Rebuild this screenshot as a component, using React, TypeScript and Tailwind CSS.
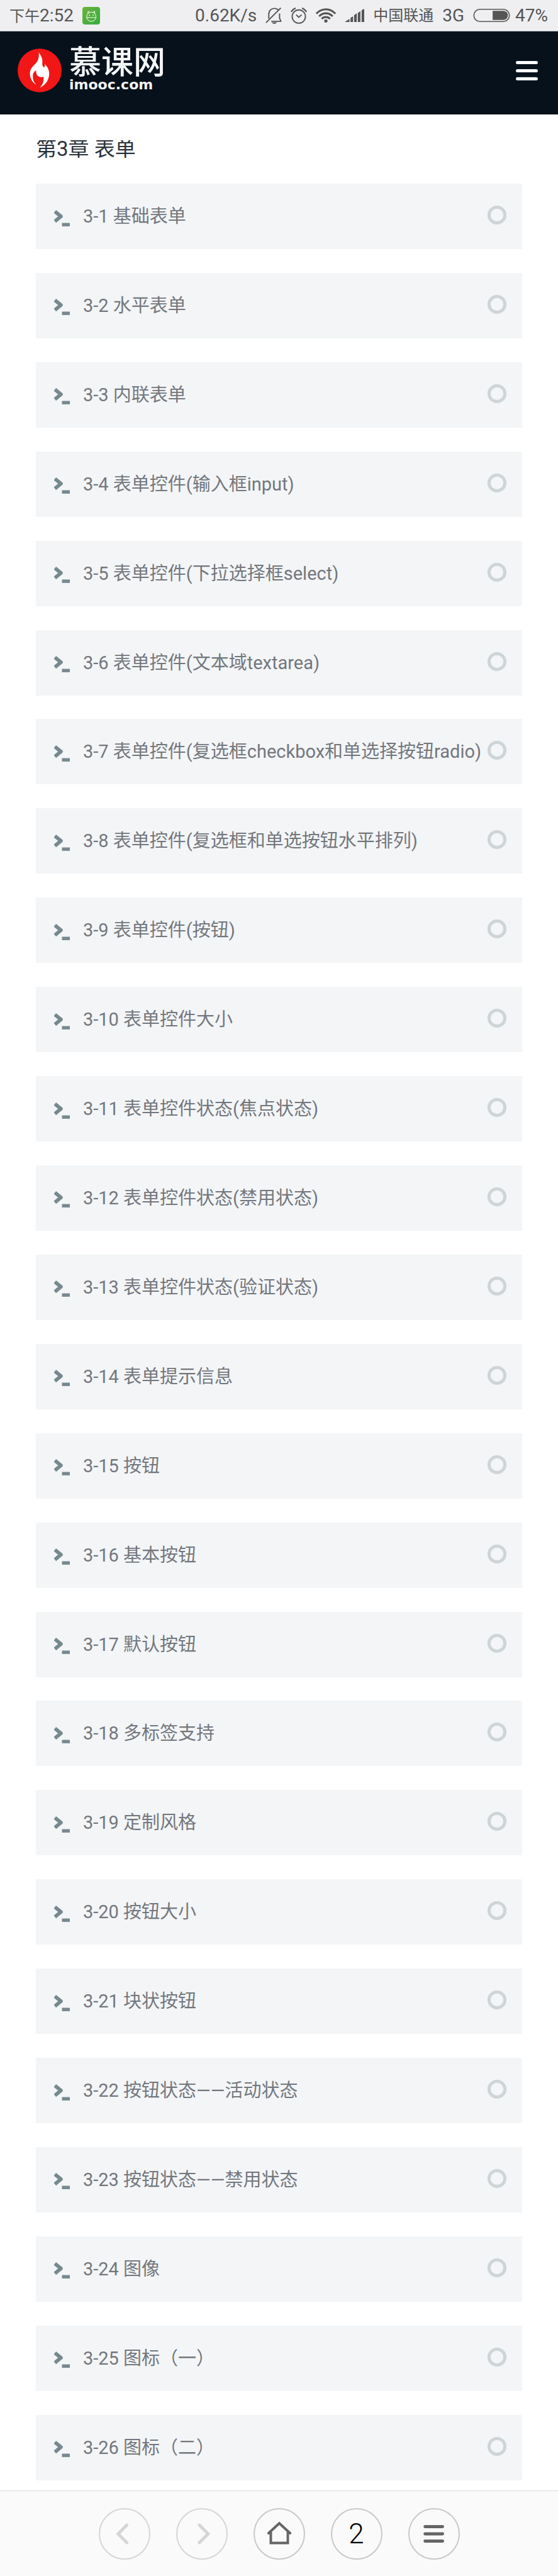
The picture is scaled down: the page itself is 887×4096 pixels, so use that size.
import React from "react";

const lessons: string[] = [
  "3-1 基础表单",
  "3-2 水平表单",
  "3-3 内联表单",
  "3-4 表单控件(输入框input)",
  "3-5 表单控件(下拉选择框select)",
  "3-6 表单控件(文本域textarea)",
  "3-7 表单控件(复选框checkbox和单选择按钮radio)",
  "3-8 表单控件(复选框和单选按钮水平排列)",
  "3-9 表单控件(按钮)",
  "3-10 表单控件大小",
  "3-11 表单控件状态(焦点状态)",
  "3-12 表单控件状态(禁用状态)",
  "3-13 表单控件状态(验证状态)",
  "3-14 表单提示信息",
  "3-15 按钮",
  "3-16 基本按钮",
  "3-17 默认按钮",
  "3-18 多标签支持",
  "3-19 定制风格",
  "3-20 按钮大小",
  "3-21 块状按钮",
  "3-22 按钮状态——活动状态",
  "3-23 按钮状态——禁用状态",
  "3-24 图像",
  "3-25 图标（一）",
  "3-26 图标（二）",
];

function AppBadge() {
  return (
    <svg viewBox="0 0 34 34" className="size-7" aria-hidden="true">
      <defs>
        <linearGradient id="badge" x1="0" y1="0" x2="1" y2="1">
          <stop offset="0" stopColor="#6db33a" />
          <stop offset="1" stopColor="#35ab40" />
        </linearGradient>
      </defs>
      <rect width="34" height="34" rx="5" fill="url(#badge)" />
      <g fill="none" stroke="#fff" strokeWidth="1.2" strokeLinejoin="round">
        <circle cx="17.200" cy="19" r="9" />
        <path d="M8.200 20.500h18" />
        <path d="M10.500 13 11 8.300l3 2.200M24 13l-.6-4.700-3 2.200" />
      </g>
      <circle cx="13.700" cy="16" r="1.100" fill="#fff" />
      <circle cx="20.700" cy="16" r="1.100" fill="#fff" />
    </svg>
  );
}

function MutedBell() {
  return (
    <svg viewBox="0 0 92 94" className="size-[26px]" fill="none" stroke="#555" strokeWidth="7" aria-hidden="true">
      <path d="M18 64V40C18 18 32 5 50 5c10 0 19 4 25 12" />
      <path d="M80 34v28l8 17H32" strokeLinejoin="round" />
      <path d="M2 87 87 2" />
      <path d="M34 85h32q-6 9-16 9t-16-9z" fill="#555" stroke="none" />
    </svg>
  );
}

function AlarmClock() {
  return (
    <svg viewBox="0 0 95 94" className="size-[26px]" fill="none" stroke="#555" strokeWidth="7" aria-hidden="true">
      <circle cx="47.500" cy="52" r="38.500" />
      <path d="m32 41 15 15 17-15" />
      <path d="M3 25Q12 9 29 3M92 25Q83 9 66 3" strokeWidth="8" />
    </svg>
  );
}

function Wifi() {
  return (
    <svg viewBox="0 0 116 82" className="h-[23px] w-8" fill="none" stroke="#555" strokeWidth="11" aria-hidden="true">
      <path d="M3 31C35-3 81-3 113 31" />
      <path d="M19 46c22-23 56-23 78 0" />
      <path d="M34 61c13-14 35-14 48 0" />
      <circle cx="58" cy="73" r="9.500" fill="#555" stroke="none" />
    </svg>
  );
}

function Signal() {
  return (
    <svg viewBox="0 0 112 76" className="h-[21px] w-[31px]" fill="#555" aria-hidden="true">
      <path d="M0 76 27 58v18zM33 76V52l15-9v33zM54 76V36l15-10v50zM75 76V24l15-10v62zM97 76V8l15-8v76z" />
    </svg>
  );
}

function Battery() {
  return (
    <svg viewBox="0 0 72 26" className="h-[21px] w-[59px]" aria-hidden="true">
      <rect x="1" y="1" width="70" height="24" rx="12" fill="none" stroke="#555" strokeWidth="2" />
      <path d="M38 4h21a9 9 0 0 1 0 18H38z" fill="#555" />
    </svg>
  );
}

function StatusBar() {
  return (
    <div className="flex items-center justify-between border-b border-[#b9babd] bg-[#efeff1] pr-4 pl-[15px] text-[28px] leading-[49px] text-[#555]">
      <div className="flex items-center gap-3.5">
        <span>
          <span className="text-2xl leading-none">下午</span>2:52
        </span>
        <AppBadge />
      </div>
      <div className="flex items-center gap-3.5">
        <span>0.62K/s</span>
        <MutedBell />
        <AlarmClock />
        <Wifi />
        <Signal />
        <span className="text-2xl leading-none">中国联通</span>
        <span>3G</span>
        <span className="flex items-center gap-2">
          <Battery />
          <span>47%</span>
        </span>
      </div>
    </div>
  );
}

function Flame() {
  return (
    <svg viewBox="0 0 258 256" className="size-[70px]" aria-hidden="true">
      <ellipse cx="129" cy="128" rx="129" ry="128" fill="#f21616" />
      <path
        d="M124 22C138 42 147 58 145 80C144 94 146 108 154 109C160 109 161 100 158 90C174 104 185 124 185 146C185 180 166 212 131 229C146 212 155 192 152 165C140 171 122 167 114 156C108 147 109 136 108 128C92 136 88 150 90 172C91 188 98 200 109 211C86 199 72 172 72 146C72 118 90 103 105 88C120 72 127 52 124 22Z"
        fill="#fff"
      />
    </svg>
  );
}

function Header() {
  return (
    <header className="flex items-center justify-between bg-[#06111b] pt-[27px] pr-8 pb-[35px] pl-7">
      <a href="#home" className="flex items-center gap-3 text-[#f4f5f6]">
        <Flame />
        <span className="flex flex-col">
          <span className="text-[51px] leading-[46px] font-medium">慕课网</span>
          <span className="font-['DejaVu_Sans'] text-[22px] leading-6 font-bold">imooc.com</span>
        </span>
      </a>
      <button type="button" aria-label="菜单">
        <svg viewBox="0 0 42 38" className="h-8 w-[35px]" stroke="#fff" strokeWidth="6" strokeLinecap="round" aria-hidden="true">
          <path d="M3 4h36M3 19.500h36M3 35h36" />
        </svg>
      </button>
    </header>
  );
}

function LessonRow({ title }: { title: string }) {
  return (
    <li>
      <a href="#lesson" className="flex items-center bg-[#f3f5f7] py-[34px] pr-[25px] pl-[29px]">
        <svg viewBox="0 -6 30 37" className="h-[31px] w-[25px] shrink-0" aria-hidden="true">
          <path d="M1.500 2.500 13 12 1.500 21.500" fill="none" stroke="#76898f" strokeWidth="7" strokeLinejoin="round" />
          <path d="M15 24.500h15V31H15z" fill="#76898f" />
        </svg>
        <span className="ml-[21px] grow text-[29px] leading-9 whitespace-nowrap text-[#73777d]">{title}</span>
        <svg viewBox="0 0 36 41" className="h-[34px] w-[30px] shrink-0" aria-hidden="true">
          <circle cx="18" cy="18" r="15.200" fill="none" stroke="#ced5d8" strokeWidth="6" />
        </svg>
      </a>
    </li>
  );
}

function NavButton({
  label,
  disabled = false,
  children,
}: {
  label: string;
  disabled?: boolean;
  children: React.ReactNode;
}) {
  return (
    <button
      type="button"
      aria-label={label}
      disabled={disabled}
      className="flex size-[82px] items-center justify-center rounded-full border-2 border-[#c9c9c9] disabled:border-[#d6d6d6]"
    >
      {children}
    </button>
  );
}

function NavGlyph({ d, color, width = 6 }: { d: string; color: string; width?: number }) {
  return (
    <svg
      viewBox="0 0 100 100"
      className="size-[82px] shrink-0"
      fill="none"
      stroke={color}
      strokeWidth={width}
      strokeLinecap="round"
      strokeLinejoin="miter"
      aria-hidden="true"
    >
      <path d={d} />
    </svg>
  );
}

function BottomBar() {
  return (
    <nav className="flex justify-center gap-[41px] border-t border-[#dcdcdc] bg-[#fafafa] pt-[27px] pb-[26px]">
      <NavButton label="后退" disabled>
        <NavGlyph d="M54.500 33 37.500 50l17 17" color="#d5d5d5" />
      </NavButton>
      <NavButton label="前进" disabled>
        <NavGlyph d="m45 33 17 17-17 17" color="#d5d5d5" />
      </NavButton>
      <NavButton label="主页">
        <NavGlyph d="M29 48.700 50 29.500l21 19.200M33.500 45v22.700h33V45" color="#656565" width={4.8} />
      </NavButton>
      <NavButton label="标签页 2">
        <span className="text-[44px] leading-none font-light text-black">2</span>
      </NavButton>
      <NavButton label="菜单">
        <NavGlyph d="M32.500 36h34M32.500 50h34M32.500 64h34" color="#656565" />
      </NavButton>
    </nav>
  );
}

export default function App() {
  return (
    <div className="flex min-h-screen flex-col bg-white font-['Roboto','Noto_Sans_CJK_SC',sans-serif]">
      <StatusBar />
      <Header />
      <main className="flex grow flex-col px-[57px] pt-[41px] pb-4">
        <h2 className="overflow-hidden pb-1 text-[33px] leading-[27px] text-[#2b333b]">第3章 表单</h2>
        <ul className="mt-[38px] flex grow flex-col justify-between">
          {lessons.map((title) => (
            <LessonRow key={title} title={title} />
          ))}
        </ul>
      </main>
      <BottomBar />
    </div>
  );
}
